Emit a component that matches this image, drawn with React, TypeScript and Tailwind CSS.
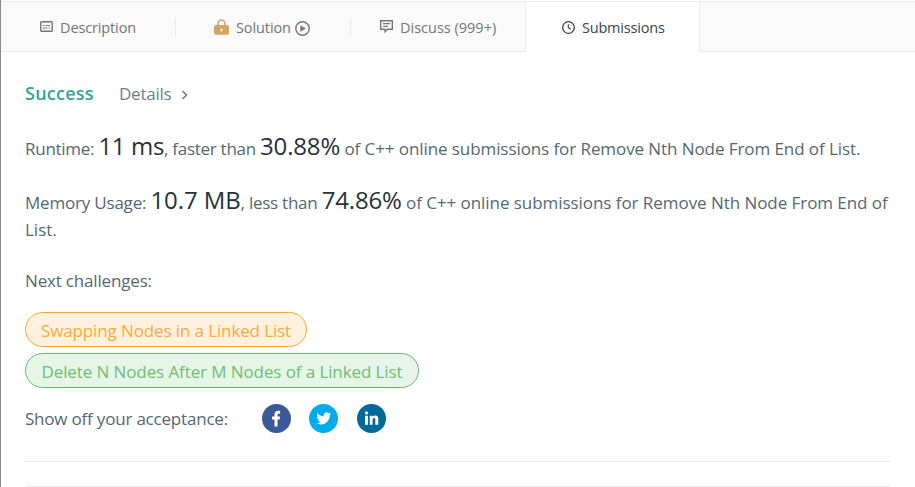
import type { ReactNode } from 'react';

function Big({ children, className = '' }: { children: ReactNode; className?: string }) {
  return <span className={`text-2xl leading-[0] text-[#263238] ${className}`}>{children}</span>;
}

function DescriptionIcon() {
  return (
    <svg width="13" height="11" viewBox="0 0 13 11" className="shrink-0">
      <rect x="0.75" y="0.75" width="11.5" height="9.5" rx="1" fill="none" stroke="currentColor" strokeWidth="1.4" />
      <path d="M3 4.5h1.5M5.5 4.5H10M3 7h4.5M8.5 7H10" stroke="currentColor" strokeWidth="1.2" />
    </svg>
  );
}

function LockIcon() {
  return (
    <svg width="15" height="16" viewBox="0 0 15 16" className="shrink-0">
      <path d="M4 8V4.5a3.5 3.5 0 0 1 7 0V8" fill="none" stroke="#cfa762" strokeWidth="1.6" />
      <rect x="0" y="6" width="15" height="9.8" rx="2" fill="#cfa762" />
      <path d="M7.5 9.5v3M6 11h3" stroke="#fff3dc" strokeWidth="1.2" />
    </svg>
  );
}

function PlayIcon() {
  return (
    <svg width="15" height="15" viewBox="0 0 15 15" className="shrink-0">
      <circle cx="7.5" cy="7.5" r="6.7" fill="none" stroke="currentColor" strokeWidth="1.4" />
      <path d="M5.3 4.3l5.4 3.2-5.4 3.2z" fill="currentColor" />
    </svg>
  );
}

function DiscussIcon() {
  return (
    <svg width="13" height="13" viewBox="0 0 13 13" className="shrink-0">
      <path d="M0.7 0.8h11.6v8.4H7.3L5 11.7V9.2H0.7z" fill="none" stroke="currentColor" strokeWidth="1.4" />
      <path d="M3 3.6h7M3 6.3h5" stroke="currentColor" strokeWidth="1.2" />
    </svg>
  );
}

function ClockIcon() {
  return (
    <svg width="13" height="13" viewBox="0 0 13 13" className="shrink-0">
      <circle cx="6.5" cy="6.5" r="5.8" fill="none" stroke="currentColor" strokeWidth="1.3" />
      <path d="M6.3 3.2v3.5l2.5 1.5" fill="none" stroke="currentColor" strokeWidth="1.1" />
    </svg>
  );
}

function Facebook() {
  return (
    <svg width="29" height="29" viewBox="0 0 29 29">
      <circle cx="14.5" cy="14.5" r="14.5" fill="#3b5998" />
      <path d="M12.5 22.5v-7H10v-3h2.5v-1.9c0-2.5 1.4-3.8 3.6-3.8.8 0 1.5.1 2 .2v2.7h-1.3c-1 0-1.3.5-1.3 1.2v1.6H18l-.4 3h-2.1v7z" fill="#fff" />
    </svg>
  );
}

function Twitter() {
  return (
    <svg width="29" height="29" viewBox="0 0 29 29">
      <circle cx="14.5" cy="14.5" r="14.5" fill="#00aced" />
      <g transform="translate(7.3 7) scale(.62)">
        <path
          d="M23.95 4.57a10 10 0 0 1-2.82.77 4.96 4.96 0 0 0 2.16-2.72c-.95.55-2.01.96-3.13 1.18a4.92 4.92 0 0 0-8.38 4.48C7.69 8.09 4.07 6.13 1.64 3.16a4.82 4.82 0 0 0-.67 2.48c0 1.71.87 3.21 2.19 4.1a4.9 4.9 0 0 1-2.23-.62v.06a4.92 4.92 0 0 0 3.95 4.83 5 5 0 0 1-2.21.08 4.94 4.94 0 0 0 4.6 3.42A9.87 9.87 0 0 1 0 19.54a13.94 13.94 0 0 0 7.55 2.21c9.05 0 14-7.5 14-13.98 0-.21 0-.42-.02-.63a9.94 9.94 0 0 0 2.46-2.55z"
          fill="#fff"
        />
      </g>
    </svg>
  );
}

function LinkedIn() {
  return (
    <svg width="29" height="29" viewBox="0 0 29 29">
      <circle cx="14.5" cy="14.5" r="14.5" fill="#00699a" />
      <circle cx="9.5" cy="8.9" r="1.7" fill="#fff" />
      <path
        d="M8 11.7h3v9H8zM12.7 11.7h2.8v1.2c.5-.8 1.4-1.4 2.7-1.4 2.4 0 3.1 1.5 3.1 3.8v5.4h-3v-4.9c0-1.2-.3-1.9-1.2-1.9-1.1 0-1.5.8-1.5 1.9v4.9h-2.9z"
        fill="#fff"
      />
    </svg>
  );
}

export default function App() {
  return (
    <div className="h-[487px] w-[915px] overflow-hidden border-l border-[#8a8a8a] bg-white pt-px font-['Open_Sans','Noto_Sans',sans-serif] whitespace-nowrap">
      <nav className="flex h-[51px] border-t border-[#ebebeb] bg-[#fafafa] text-[14.5px] text-[#757575]">
        <div className="flex w-[175px] items-center border-b border-[#ebebeb]">
          <div className="flex h-5 w-full items-center border-r border-[#ebebeb] pl-[39px]">
            <DescriptionIcon />
            <span className="mt-0.5 ml-[7px] tracking-[-0.13px]">Description</span>
          </div>
        </div>
        <div className="flex w-[175px] items-center border-b border-[#ebebeb]">
          <div className="flex h-5 w-full items-center border-r border-[#ebebeb] pl-[38px]">
            <LockIcon />
            <span className="mt-0.5 ml-[7px] tracking-[-0.1px]">Solution</span>
            <span className="ml-1 pt-1">
              <PlayIcon />
            </span>
          </div>
        </div>
        <div className="flex w-[175px] items-center border-r border-b border-[#ebebeb] pl-[29px]">
          <DiscussIcon />
          <span className="mt-0.5 ml-[7px]">Discuss (999+)</span>
        </div>
        <div className="flex w-[173px] items-center bg-white pl-9 text-[#37474f]">
          <ClockIcon />
          <span className="mt-px ml-[7px] tracking-[-0.2px]">Submissions</span>
        </div>
        <div className="flex-1 border-b border-l border-[#ebebeb]" />
      </nav>

      <main className="pl-6 text-[17px] leading-[27px] text-[#546872]">
        <div className="mt-7 flex items-center">
          <span className="w-[94px] text-lg leading-[27px] font-semibold tracking-[0.25px] text-[#2fa59b]">Success</span>
          <span className="tracking-[-0.25px] text-[#6b828d]">Details</span>
          <svg width="7" height="10" viewBox="0 0 7 10" className="mt-[3px] ml-[10px]">
            <path d="M1.5 1l4 4-4 4" fill="none" stroke="#607d8b" strokeWidth="1.5" />
          </svg>
        </div>

        <p className="mt-7">
          <span className="tracking-[-0.27px]">Runtime: </span>
          <Big className="tracking-[-0.36px]">11 ms</Big>
          <span className="tracking-[-0.27px]">, faster than </span>
          <Big className="tracking-[-0.17px]">30.88%</Big>
          <span className="tracking-[-0.08px]"> of C++ online submissions for Remove Nth Node From End of List.</span>
        </p>

        <p className="mt-[27px]">
          <span className="tracking-[-0.2px]">Memory Usage: </span>
          <Big className="tracking-[-0.1px]">10.7 MB</Big>
          <span className="tracking-[-0.25px]">, less than </span>
          <Big className="tracking-[-0.17px]">74.86%</Big>
          <span className="tracking-[-0.055px]"> of C++ online submissions for Remove Nth Node From End of</span>
          <br />
          List.
        </p>

        <p className="mt-6 tracking-[-0.17px]">Next challenges:</p>

        <div className="mt-[18px] flex flex-col items-start gap-1.5">
          <a className="flex h-[35px] w-[282px] items-center justify-center rounded-full border border-[#ffa726] bg-[#fff1de] pt-0.5 tracking-[-0.12px] text-[#ffa93a]">
            Swapping Nodes in a Linked List
          </a>
          <a className="flex h-[35px] w-[394px] items-center justify-center rounded-full border border-[#66bb6a] bg-[#e7f5e9] pt-0.5 tracking-[-0.1px] text-[#6fbe73]">
            Delete N Nodes After M Nodes of a Linked List
          </a>
        </div>

        <div className="mt-4 flex h-[29px] items-center">
          <span className="w-[237px] tracking-[-0.2px]">Show off your acceptance:</span>
          <div className="flex gap-[18px]">
            <Facebook />
            <Twitter />
            <span className="ml-px">
              <LinkedIn />
            </span>
          </div>
        </div>

        <div className="mt-7 mr-6 h-[26px] border-y border-[#ebebeb]" />
      </main>
    </div>
  );
}
